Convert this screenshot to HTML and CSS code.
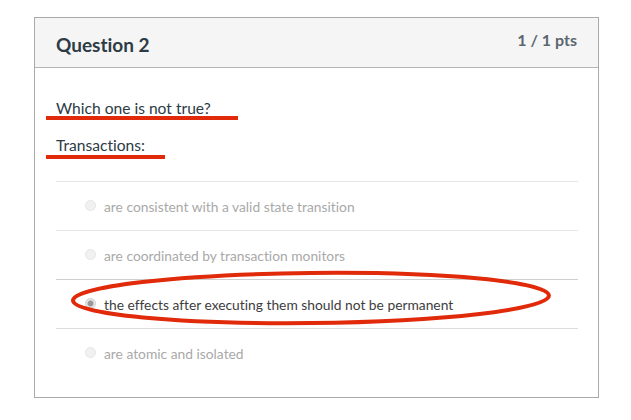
FILE: index.html
```
<!DOCTYPE html>
<html>
<head>
<meta charset="utf-8">
<link rel="stylesheet" href="styles.css">
</head>
<body>
<div class="card">
  <div class="header">
    <h2 class="title">Question 2</h2>
    <div class="pts">1 / 1 pts</div>
  </div>
  <div class="body">
    <p class="q">Which one is not true?</p>
    <p class="q">Transactions:</p>
    <div class="answers">
      <div class="answer"><span class="radio"></span><span class="atext">are consistent with a valid state transition</span></div>
      <div class="answer"><span class="radio"></span><span class="atext">are coordinated by transaction monitors</span></div>
      <div class="answer selected"><span class="radio checked"></span><span class="atext">the effects after executing them should not be permanent</span></div>
      <div class="answer sel-after"><span class="radio"></span><span class="atext">are atomic and isolated</span></div>
    </div>
  </div>
</div>
<svg class="marks" width="631" height="420" viewBox="0 0 631 420">
  <line x1="46" y1="118" x2="238" y2="118" stroke="#e02a0a" stroke-width="4"/>
  <line x1="46" y1="157" x2="165" y2="157" stroke="#e02a0a" stroke-width="4"/>
  <ellipse cx="311" cy="298" rx="238" ry="25" fill="none" stroke="#e02a0a" stroke-width="4" transform="rotate(-0.6 311 298)"/>
</svg>
</body>
</html>
```
FILE: styles.css
```
html, body {
  margin: 0;
  padding: 0;
  background: #fff;
}
body {
  width: 631px;
  height: 420px;
  position: relative;
  font-family: Lato, "Open Sans", sans-serif;
  font-variant-ligatures: no-common-ligatures no-discretionary-ligatures;
  color: #2d3b45;
}
.card {
  margin: 17px 0 0 34px;
  width: 563px;
  height: 379px;
  border: 1px solid #aaaaaa;
  box-sizing: content-box;
}
.header {
  height: 49px;
  background: #f5f5f5;
  border-bottom: 1px solid #b5b5b5;
  display: flex;
  justify-content: space-between;
  align-items: flex-start;
  padding: 0 21px;
}
.title {
  margin: 16px 0 0 0;
  font-size: 19px;
  font-weight: 700;
  line-height: 22px;
  color: #2d3b45;
}
.pts {
  margin-top: 12px;
  font-size: 16px;
  font-weight: 700;
  color: #5b6770;
  line-height: 20px;
}
.body {
  padding: 31px 20px 0 21px;
}
.q {
  margin: 0 0 18px 0;
  font-size: 15.6px;
  line-height: 19px;
  color: #2d3b45;
}
.answers {
  margin-top: 26px;
}
.answer {
  height: 48px;
  border-top: 1px solid #e6e6e6;
  display: flex;
  align-items: center;
  padding-left: 29px;
  font-size: 13.8px;
  color: #a9a9a9;
}
.answer.selected {
  color: #3d3d3d;
  border-top-color: #cfcfcf;
}
.answer.sel-after {
  border-top-color: #dcdcdc;
}
.radio {
  width: 11px;
  height: 11px;
  border-radius: 50%;
  background: #f1f1f1;
  border: 1px solid #e6e6e6;
  box-sizing: border-box;
  margin-right: 8px;
  margin-top: -2px;
}
.radio.checked {
  background: radial-gradient(circle, #999 0 2.5px, #e8e8e8 3.5px);
  border-color: #d0d0d0;
}
.marks {
  position: absolute;
  left: 0;
  top: 0;
  pointer-events: none;
}
```
